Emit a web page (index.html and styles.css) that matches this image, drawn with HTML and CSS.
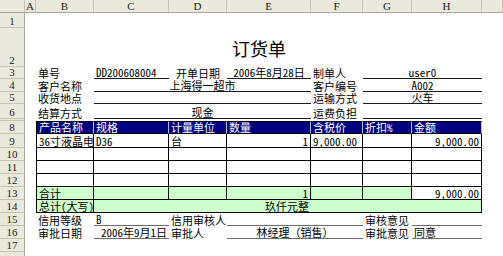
FILE: index.html
```html
<!DOCTYPE html>
<html lang="zh">
<head>
<meta charset="utf-8">
<title>订货单</title>
<link rel="stylesheet" href="styles.css">
</head>
<body>
<div class="sheet">
  <div class="corner"></div>
  <div class="ch">A</div><div class="ch">B</div><div class="ch">C</div><div class="ch">D</div><div class="ch">E</div><div class="ch">F</div><div class="ch">G</div><div class="ch">H</div><div class="ch"></div>

  <div class="rh">1</div><div class="c s9"></div>

  <div class="rh">2</div><div class="c"></div><div class="c s7 title">订货单</div><div class="c"></div>

  <div class="rh">3</div><div class="c"></div>
  <div class="c">单号</div><div class="c ul">DD200608004</div><div class="c ctr">开单日期</div><div class="c ul ctr">2006年8月28日</div><div class="c">制单人</div><div class="c s2 ul ctr">user0</div><div class="c"></div>

  <div class="rh">4</div><div class="c"></div>
  <div class="c">客户名称</div><div class="c s3 ul ctr">上海得一超市</div><div class="c">客户编号</div><div class="c s2 ul ctr">A002</div><div class="c"></div>

  <div class="rh">5</div><div class="c"></div>
  <div class="c">收货地点</div><div class="c s3 ul"></div><div class="c">运输方式</div><div class="c s2 ul ctr">火车</div><div class="c"></div>

  <div class="rh">6</div><div class="c"></div>
  <div class="c">结算方式</div><div class="c s3 ul ctr">现金</div><div class="c">运费负担</div><div class="c s2 ul"></div><div class="c"></div>

  <div class="rh"></div><div class="c s9"></div>

  <div class="rh">8</div><div class="c"></div>
  <div class="c th first">产品名称</div><div class="c th">规格</div><div class="c th">计量单位</div><div class="c th">数量</div><div class="c th">含税价</div><div class="c th">折扣%</div><div class="c th">金额</div><div class="c"></div>

  <div class="rh">9</div><div class="c"></div>
  <div class="c td first">36寸液晶电</div><div class="c td">D36</div><div class="c td">台</div><div class="c td rt">1</div><div class="c td">9,000.00</div><div class="c td"></div><div class="c td rt">9,000.00</div><div class="c"></div>

  <div class="rh">10</div><div class="c"></div>
  <div class="c td first"></div><div class="c td"></div><div class="c td"></div><div class="c td"></div><div class="c td"></div><div class="c td"></div><div class="c td"></div><div class="c"></div>

  <div class="rh">11</div><div class="c"></div>
  <div class="c td first"></div><div class="c td"></div><div class="c td"></div><div class="c td"></div><div class="c td"></div><div class="c td"></div><div class="c td"></div><div class="c"></div>

  <div class="rh">12</div><div class="c"></div>
  <div class="c td first"></div><div class="c td"></div><div class="c td"></div><div class="c td"></div><div class="c td"></div><div class="c td"></div><div class="c td"></div><div class="c"></div>

  <div class="rh">13</div><div class="c"></div>
  <div class="c td first green">合计</div><div class="c td green"></div><div class="c td green"></div><div class="c td green rt">1</div><div class="c td green"></div><div class="c td green"></div><div class="c td rt">9,000.00</div><div class="c"></div>

  <div class="rh">14</div><div class="c"></div>
  <div class="c td first green">总计(大写)</div><div class="c s3 green bb rt">玖仟元整</div><div class="c s3 green bb br"></div><div class="c"></div>

  <div class="rh">15</div><div class="c"></div>
  <div class="c">信用等级</div><div class="c ul2">B</div><div class="c">信用审核人</div><div class="c s2 ul2"></div><div class="c">审核意见</div><div class="c ul2"></div><div class="c"></div>

  <div class="rh">16</div><div class="c"></div>
  <div class="c">审批日期</div><div class="c ul2 rt">2006年9月1日</div><div class="c">审批人</div><div class="c s2 ul2 ctr">林经理（销售）</div><div class="c">审批意见</div><div class="c ul2">同意</div><div class="c"></div>

  <div class="rh">17</div><div class="c s9"></div>
  <div class="rh"></div><div class="c s9"></div>
</div>
</body>
</html>
```

FILE: styles.css
```css
html, body {
  margin: 0;
  padding: 0;
  background: #ffffff;
  overflow: hidden;
}

.sheet {
  display: grid;
  grid-template-columns: 25px 11px 58px 75px 58px 84px 52px 49px 70px 21px;
  grid-template-rows: 13px 15px 39px 12px 13px 12px 15px 2px 13px 14px 13px 13px 13px 13px 13px 13px 13px 13px 13px;
  width: 503px;
  height: 256px;
  overflow: hidden;
  font-family: "Noto Sans Mono CJK SC", "Noto Sans CJK SC", sans-serif;
  font-size: 11px;
  color: #000;
}

.corner {
  background: #ebe9dc;
  border-right: 1px solid #c6c3b3;
  border-bottom: 1px solid #a9a695;
  box-sizing: border-box;
}

.ch {
  background: #ebe9dc;
  border-right: 1px solid #c6c3b3;
  border-bottom: 1px solid #a9a695;
  box-sizing: border-box;
  font-family: "Liberation Serif", serif;
  font-size: 11px;
  line-height: 12px;
  text-align: center;
  color: #222;
}

.rh {
  background: #ebe9dc;
  border-right: 1px solid #a9a695;
  border-bottom: 1px solid #c6c3b3;
  box-sizing: border-box;
  font-family: "Liberation Serif", serif;
  font-size: 11px;
  line-height: 11px;
  display: flex;
  align-items: flex-end;
  justify-content: center;
  color: #222;
  overflow: hidden;
}

.c {
  box-sizing: border-box;
  display: flex;
  align-items: flex-end;
  padding: 0 2px;
  line-height: 11px;
  white-space: nowrap;
  min-width: 0;
}

.s2 { grid-column: span 2; }
.s3 { grid-column: span 3; }
.s7 { grid-column: span 7; }
.s9 { grid-column: span 9; }

.ctr { justify-content: center; }
.rt { justify-content: flex-end; }

.title {
  font-size: 18px;
  line-height: 20px;
  align-items: center;
  justify-content: center;
}

.ul { border-bottom: 1px solid #1a1a1a; }
.ul2 { border-bottom: 1px solid #6e6e6e; }

.th {
  background: #000080;
  color: #fff;
  border-top: 1px solid #000;
  border-right: 1px solid #b8b8d8;
  border-bottom: 1px solid #000;
}

.td {
  border-right: 1px solid #000;
  border-bottom: 1px solid #000;
}

.first { border-left: 1px solid #000; }

.green { background: #ccffcc; }
.bb { border-bottom: 1px solid #000; }
.br { border-right: 1px solid #000; }
```
